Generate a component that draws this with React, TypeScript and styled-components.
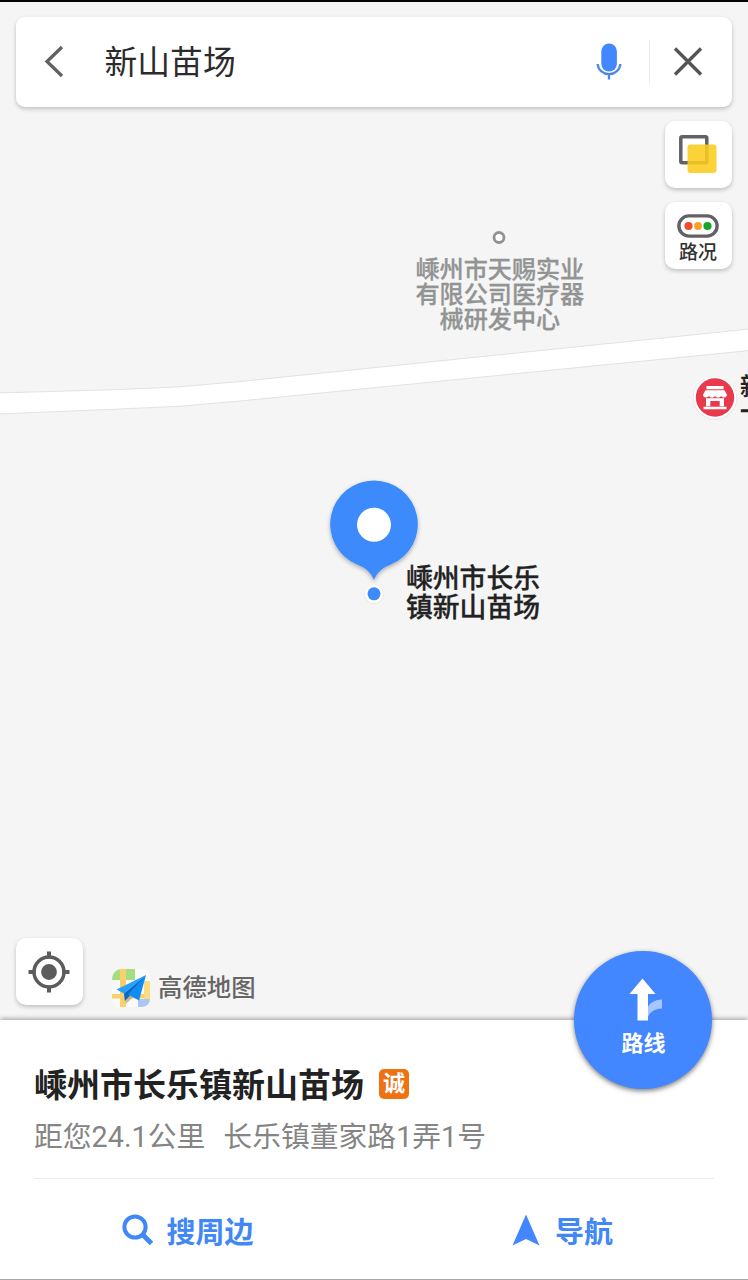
import React from "react";
import styled, { createGlobalStyle } from "styled-components";

const GlobalStyle = createGlobalStyle`
  * { box-sizing: border-box; }
  body { margin: 0; background: #f5f5f5; }
  button { border: 0; padding: 0; margin: 0; background: none; font: inherit; color: inherit; }
  svg { display: block; flex: none; }
`;

const Screen = styled.div`
  width: 748px;
  height: 1280px;
  display: flex;
  flex-direction: column;
  overflow: hidden;
  border-top: 2px solid #050505;
  border-bottom: 1px solid #a9a9a9;
  background: #f5f5f5;
  font-family: Roboto, "Noto Sans CJK SC", sans-serif;
  color: #222;
`;

const MapArea = styled.main`
  position: relative;
  flex: 1;
  display: flex;
  flex-direction: column;
  padding: 15px 16.5px 15px 15.5px;
`;

const MapCanvas = styled.div`
  position: absolute;
  inset: -2px 0 0;
  overflow: hidden;
`;

const Road = styled.svg`
  position: absolute;
  top: 0;
  left: 0;
`;

const MapItem = styled.div<{ $x: number; $y: number }>`
  position: absolute;
  left: ${(p) => p.$x}px;
  top: ${(p) => p.$y}px;
`;

const MapLabel = styled.div<{ $size: number; $line: number; $color: string; $center?: boolean }>`
  font-size: ${(p) => p.$size}px;
  line-height: ${(p) => p.$line}px;
  font-weight: 500;
  color: ${(p) => p.$color};
  text-align: ${(p) => (p.$center ? "center" : "left")};
  white-space: pre;
  -webkit-text-stroke: 0.3px ${(p) => p.$color};
`;

const SearchBar = styled.header`
  position: relative;
  height: 90px;
  flex: none;
  display: flex;
  align-items: center;
  padding: 0 28.5px 0 26px;
  background: #fff;
  border-radius: 9px;
  box-shadow: 0 2px 4px rgba(0, 0, 0, 0.22);
`;

const SearchText = styled.div`
  flex: 1;
  margin-left: 39px;
  padding-top: 2px;
  font-size: 32.8px;
  line-height: 48px;
  font-weight: 400;
  color: #2b2b2b;
`;

const Divider = styled.span`
  width: 1px;
  height: 44px;
  margin: 0 23px 0 27px;
  background: #ececec;
`;

const Tools = styled.div`
  position: relative;
  align-self: flex-end;
  display: flex;
  flex-direction: column;
  gap: 14px;
  margin-top: 14px;
`;

const ToolButton = styled.button`
  width: 67px;
  height: 67px;
  display: flex;
  flex-direction: column;
  align-items: center;
  justify-content: center;
  border-radius: 10px;
  background: #fff;
  box-shadow: 0 2px 4px rgba(0, 0, 0, 0.22);
`;

const TrafficButton = styled(ToolButton)`
  padding-top: 6px;
`;

const ToolText = styled.span`
  margin-top: 4px;
  font-size: 19px;
  line-height: 22px;
  font-weight: 500;
  color: #333;
`;

const MapFooter = styled.div`
  position: relative;
  display: flex;
  align-items: flex-end;
  margin-top: auto;
`;

const Brand = styled.div`
  display: flex;
  align-items: center;
  margin-left: 28.5px;
  margin-bottom: -3px;
`;

const BrandName = styled.span`
  margin-left: 6px;
  font-size: 24.4px;
  line-height: 36px;
  font-weight: 500;
  color: #666;
`;

const Sheet = styled.section`
  position: relative;
  height: 259px;
  flex: none;
  display: flex;
  flex-direction: column;
  padding: 44px 34px 0;
  background: #fff;
  box-shadow: 0 -1px 5px rgba(0, 0, 0, 0.38);
`;

const TitleRow = styled.div`
  display: flex;
  align-items: center;
  height: 44px;
`;

const Title = styled.h1`
  margin: 0;
  font-size: 33px;
  line-height: 44px;
  font-weight: 700;
  color: #222;
`;

const TrustBadge = styled.span`
  width: 30px;
  height: 30px;
  margin: -5px 0 0 15px;
  display: flex;
  align-items: center;
  justify-content: center;
  border-radius: 5px;
  background: #ee7112;
  color: #fff;
  font-size: 22px;
  line-height: 30px;
  font-weight: 700;
`;

const Address = styled.p`
  display: flex;
  gap: 18px;
  margin: 9px 0 0;
  font-size: 28.8px;
  line-height: 40px;
  font-weight: 400;
  color: #858585;
  white-space: nowrap;
`;

const Actions = styled.div`
  display: grid;
  grid-template-columns: 1fr 1fr;
  align-items: start;
  flex: 1;
  margin-top: 21px;
  border-top: 1px solid #ececec;
`;

const Action = styled.button<{ $shift: number; $gap: number }>`
  height: 101px;
  display: flex;
  align-items: center;
  padding-left: ${(p) => p.$shift}px;
  gap: ${(p) => p.$gap}px;
  font-size: 29px;
  font-weight: 700;
  color: #4287f6;
`;

const RouteButton = styled.button`
  position: absolute;
  right: 36px;
  top: -69px;
  width: 138px;
  height: 138px;
  display: flex;
  flex-direction: column;
  align-items: center;
  gap: 7px;
  padding: 27px 0 0 1px;
  border-radius: 50%;
  background: #4287ff;
  color: #fff;
  font-size: 22px;
  line-height: 30px;
  font-weight: 700;
  box-shadow: 0 2px 5px rgba(0, 0, 0, 0.5);
`;

const BackIcon = () => (
  <svg width="24" height="34" viewBox="0 0 24 34" fill="none">
    <path d="M20 2 5 16.500l15 14.500" stroke="#626262" strokeWidth="3.300" />
  </svg>
);

const MicIcon = () => (
  <svg width="26" height="38" viewBox="0 0 26 38" fill="none">
    <rect x="5.300" y=".5" width="15.600" height="28" rx="7.800" fill="#4287ff" />
    <path d="M1.600 21c.6 6.200 5.600 10.200 11.400 10.200s10.800-4 11.400-10.200M13 31V36.500" stroke="#4b86e8" strokeWidth="2.300" />
  </svg>
);

const CloseIcon = () => (
  <svg width="30" height="30" viewBox="0 0 30 30" fill="none">
    <path d="m2 1.500 26 26M28 1.500 2 27.500" stroke="#555" strokeWidth="3.400" />
  </svg>
);

const LayersIcon = () => (
  <svg width="40" height="42" viewBox="0 0 40 42" fill="none">
    <rect x="2.800" y="2.800" width="26" height="26" rx="1.500" stroke="#626266" strokeWidth="3.500" />
    <rect x="9.500" y="10.500" width="29" height="28.500" rx="3" fill="#fbcd1c" fillOpacity=".88" />
  </svg>
);

const TrafficIcon = () => (
  <svg width="42" height="24" viewBox="0 0 42 24" fill="none">
    <rect x="1.900" y="1.900" width="38.200" height="20.200" rx="10.100" stroke="#626266" strokeWidth="3.400" />
    <circle cx="11.500" cy="12" r="4.100" fill="#f04b2e" />
    <circle cx="21" cy="12" r="3.900" fill="#f9a02c" />
    <circle cx="30.500" cy="12" r="4.100" fill="#18a52c" />
  </svg>
);

const LocateIcon = () => (
  <svg width="42" height="42" viewBox="0 0 42 42" fill="none" stroke="#5c5c5c">
    <circle cx="21" cy="21" r="15" strokeWidth="3.500" />
    <circle cx="21" cy="21" r="7.900" fill="#5c5c5c" stroke="none" />
    <path d="M21 .5v7M21 34.500v7M.5 21h7M34.500 21h7" strokeWidth="4" />
  </svg>
);

const BrandIcon = () => (
  <svg width="41" height="40" viewBox="0 0 41 40">
    <rect x="1" y="1" width="38" height="38" rx="7" fill="#fafafa" />
    <path d="M11 1h13v11H1C1 5 5 1 11 1Z" fill="#a4de80" />
    <path d="M9 1h6v38H9zM1 26h38v4.500H1z" fill="#fbcf6c" />
    <path d="M33 13h6v18h-6z" fill="#fbdc83" />
    <path d="M27 31h12c0 5-4 8-9 8h-3z" fill="#a9c9f4" />
    <path d="m14 26 1 10 7-7z" fill="#a79b73" opacity=".65" />
    <path d="M35 7 5.500 21.500l7.500 4Z" fill="#27a2fb" />
    <path d="M35 7 13 25.500l.8 7.500 5.200-5.500Z" fill="#086ac6" />
    <path d="M35 7 17 26.500l11 6Z" fill="#118cf0" />
  </svg>
);

const ShopIcon = () => (
  <svg width="46" height="46" viewBox="0 0 46 46">
    <circle cx="23" cy="23" r="22" fill="#dcdcdc" opacity=".6" />
    <circle cx="23" cy="22.500" r="21.300" fill="#fff" />
    <circle cx="23" cy="22.500" r="19.200" fill="#e93a4d" />
    <path
      d="M14.500 11h17v3.200h-17zM13.500 15.200h19l2.500 4.600c0 3-4 3.600-6 1.200-1.600 2.200-4.400 2.200-6 0-1.600 2.200-4.400 2.200-6 0-2 2.400-6 1.800-6-1.200z"
      fill="#fff"
    />
    <path d="M14 23.200h18v8h-4.300V26h-9.400v5.200H14zM11.500 31.800h23v2.400h-23z" fill="#fff" />
  </svg>
);

const PinIcon = () => (
  <svg width="104" height="134" viewBox="0 0 104 134">
    <defs>
      <filter id="pinShadow" x="-20%" y="-20%" width="140%" height="140%">
        <feDropShadow dx="0" dy="2" stdDeviation="2" floodColor="#000" floodOpacity=".3" />
      </filter>
    </defs>
    <path
      d="M52 8.500a43.700 43.700 0 0 0-17 84c8 3.300 13.500 7 17 15.500 3.500-8.500 9-12.200 17-15.500a43.700 43.700 0 0 0-17-84Z"
      fill="#3d8afd"
      filter="url(#pinShadow)"
    />
    <circle cx="52" cy="52.800" r="17" fill="#fff" />
    <circle cx="52" cy="122.300" r="10" fill="#dedede" opacity=".6" />
    <circle cx="52" cy="121.800" r="9.300" fill="#fff" />
    <circle cx="52" cy="121.800" r="6.500" fill="#3d8afd" />
  </svg>
);

const RouteIcon = () => (
  <svg width="36" height="44" viewBox="0 0 36 44">
    <path d="M21 42V31c2-6 7-9 15-9.500v9C28 31 23 34 21 42Z" fill="#a5c6ff" />
    <path d="M16.500.5 29.500 16H22v26.500H11.500V16h-8Z" fill="#fff" />
  </svg>
);

const SearchIcon = () => (
  <svg width="32" height="32" viewBox="0 0 32 32" fill="none" stroke="#4287f6">
    <circle cx="13" cy="13" r="10.600" strokeWidth="4" />
    <path d="m20.500 20.500 9 9" strokeWidth="5" />
  </svg>
);

const NavIcon = () => (
  <svg width="28" height="32" viewBox="0 0 28 32">
    <path d="M14 .5 27.500 31.500 14 25 .5 31.500Z" fill="#4287ff" />
  </svg>
);

export default function App() {
  return (
    <>
      <GlobalStyle />
      <Screen>
        <MapArea>
          <MapCanvas>
            <Road width="748" height="1020" viewBox="0 0 748 1020">
              <path
                d="M-2 393 120 389.500Q180 388 240 381.500L750 329V350.500L240 401Q180 407.500 120 409L-2 414Z"
                fill="#fff"
                stroke="#e2e2e2"
                strokeWidth="1"
              />
              <circle cx="499" cy="237.500" r="5" fill="#fff" stroke="#929292" strokeWidth="2.800" />
            </Road>
            <MapItem $x={415.5} $y={257.5}>
              <MapLabel $size={24.1} $line={25} $color="#929494" $center>
                {"嵊州市天赐实业\n有限公司医疗器\n械研发中心"}
              </MapLabel>
            </MapItem>
            <MapItem $x={692} $y={375}>
              <ShopIcon />
            </MapItem>
            <MapItem $x={740} $y={375}>
              <MapLabel $size={24} $line={25} $color="#222">
                {"新\n一"}
              </MapLabel>
            </MapItem>
            <MapItem $x={321.5} $y={472}>
              <PinIcon />
            </MapItem>
            <MapItem $x={406} $y={565}>
              <MapLabel $size={26.8} $line={28.5} $color="#222">
                {"嵊州市长乐\n镇新山苗场"}
              </MapLabel>
            </MapItem>
          </MapCanvas>
          <SearchBar>
            <BackIcon />
            <SearchText>新山苗场</SearchText>
            <MicIcon />
            <Divider />
            <CloseIcon />
          </SearchBar>
          <Tools>
            <ToolButton aria-label="图层">
              <LayersIcon />
            </ToolButton>
            <TrafficButton>
              <TrafficIcon />
              <ToolText>路况</ToolText>
            </TrafficButton>
          </Tools>
          <MapFooter>
            <ToolButton aria-label="定位">
              <LocateIcon />
            </ToolButton>
            <Brand>
              <BrandIcon />
              <BrandName>高德地图</BrandName>
            </Brand>
          </MapFooter>
        </MapArea>
        <Sheet>
          <TitleRow>
            <Title>嵊州市长乐镇新山苗场</Title>
            <TrustBadge>诚</TrustBadge>
          </TitleRow>
          <Address>
            <span>距您24.1公里</span>
            <span>长乐镇董家路1弄1号</span>
          </Address>
          <Actions>
            <Action $shift={88} $gap={12.5}>
              <SearchIcon />
              搜周边
            </Action>
            <Action $shift={137.5} $gap={15.5}>
              <NavIcon />
              导航
            </Action>
          </Actions>
          <RouteButton>
            <RouteIcon />
            <span>路线</span>
          </RouteButton>
        </Sheet>
      </Screen>
    </>
  );
}
